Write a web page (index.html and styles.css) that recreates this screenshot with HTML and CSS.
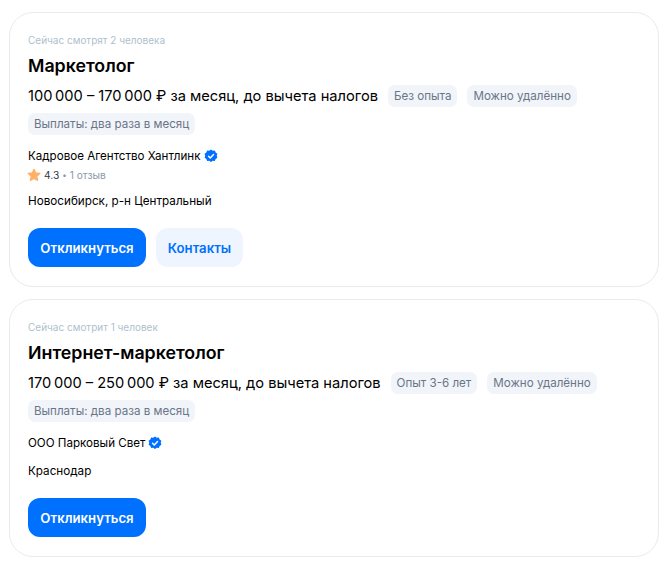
FILE: index.html
```html
<!DOCTYPE html>
<html lang="ru">
<head>
    <meta charset="UTF-8">
    <title>Вакансии</title>
    <link rel="stylesheet" href="styles.css">
</head>
<body>
    <svg class="defs" width="0" height="0">
        <symbol id="verified" viewBox="0 0 16 16">
            <path fill="#0070ff" d="M8 .6l2 1.3 2.4-.1.9 2.2 2 1.4-.7 2.3.7 2.3-2 1.4-.9 2.2-2.4-.1-2 1.3-2-1.3-2.4.1-.9-2.2-2-1.4.7-2.3-.7-2.3 2-1.4.9-2.2 2.4.1z"/>
            <path fill="none" stroke="#fff" stroke-width="1.6" stroke-linecap="round" stroke-linejoin="round" d="M5.2 8.2l2 2 3.7-4"/>
        </symbol>
    </svg>

    <div class="card">
        <div class="watching">Сейчас смотрят 2 человека</div>
        <h2 class="title">Маркетолог</h2>
        <div class="info">
            <span class="salary">100&#8201;000 – 170&#8201;000 ₽ за месяц, до вычета налогов</span>
            <span class="tag">Без опыта</span>
            <span class="tag">Можно удалённо</span>
            <span class="tag">Выплаты: два раза в месяц</span>
        </div>
        <div class="company">Кадровое Агентство Хантлинк <svg class="badge"><use href="#verified"/></svg></div>
        <div class="rating">
            <svg class="star" viewBox="0 0 16 16"><path fill="#ffb169" stroke="#ffb169" stroke-width="1.5" stroke-linejoin="round" d="M8 1.5l2 4.2 4.6.6-3.4 3.2.9 4.6L8 11.8l-4.1 2.3.9-4.6L1.4 6.300l4.600-.6z"/></svg>
            <span class="score">4.3</span>
            <span class="dot">•</span>
            <span class="reviews">1 отзыв</span>
        </div>
        <div class="city">Новосибирск, р-н Центральный</div>
        <div class="actions">
            <button class="btn-primary">Откликнуться</button>
            <button class="btn-light">Контакты</button>
        </div>
    </div>

    <div class="card">
        <div class="watching">Сейчас смотрит 1 человек</div>
        <h2 class="title">Интернет-маркетолог</h2>
        <div class="info">
            <span class="salary">170&#8201;000 – 250&#8201;000 ₽ за месяц, до вычета налогов</span>
            <span class="tag">Опыт 3-6 лет</span>
            <span class="tag">Можно удалённо</span>
            <span class="tag">Выплаты: два раза в месяц</span>
        </div>
        <div class="company">ООО Парковый Свет <svg class="badge"><use href="#verified"/></svg></div>
        <div class="city city-plain">Краснодар</div>
        <div class="actions">
            <button class="btn-primary">Откликнуться</button>
        </div>
    </div>
</body>
</html>
```

FILE: styles.css
```css
* {
    margin: 0;
    padding: 0;
    box-sizing: border-box;
}

body {
    font-family: 'Inter', 'Roboto', sans-serif;
    background: #fff;
    color: #000;
    padding: 12px 8px 9px 9px;
    display: flex;
    flex-direction: column;
    gap: 12px;
}

.defs {
    position: absolute;
}

.card {
    border: 1px solid #e7ebf2;
    border-radius: 24px;
    padding: 20px 18px 19px;
}

.watching {
    font-size: 10px;
    line-height: 14px;
    color: #aebfcd;
}

.title {
    font-size: 17.8px;
    line-height: 24px;
    font-weight: 600;
    margin-top: 7px;
}

.info {
    display: flex;
    flex-wrap: wrap;
    align-items: center;
    gap: 6px 10px;
    margin-top: 7px;
}

.salary {
    font-size: 14.65px;
    line-height: 22px;
}

.tag {
    height: 22px;
    line-height: 22px;
    padding: 0 6px;
    border-radius: 7px;
    background: #f1f4f9;
    color: #6b7588;
    font-size: 11.6px;
}

.company {
    display: flex;
    align-items: center;
    gap: 3px;
    font-size: 11.6px;
    line-height: 16px;
    margin-top: 13px;
}

.badge {
    width: 14px;
    height: 14px;
}

.rating {
    display: flex;
    align-items: center;
    gap: 3px;
    font-size: 10.2px;
    line-height: 16px;
    margin-top: 3px;
    margin-left: -1px;
}

.star {
    width: 14px;
    height: 14px;
}

.score {
    color: #303a47;
}

.dot {
    color: #8b98a8;
    font-size: 8px;
}

.reviews {
    color: #8b98a8;
}

.city {
    font-size: 11.7px;
    line-height: 16px;
    margin-top: 10px;
}

.city-plain {
    margin-top: 12px;
}

.actions {
    display: flex;
    gap: 10px;
    margin-top: 19px;
}

button {
    height: 39px;
    border: none;
    border-radius: 12px;
    font-family: inherit;
    font-size: 13.2px;
    font-weight: 600;
    cursor: pointer;
}

.btn-primary {
    width: 118px;
    background: #0070ff;
    color: #fff;
}

.btn-light {
    width: 87px;
    background: #eef5ff;
    color: #0070ff;
}
```
